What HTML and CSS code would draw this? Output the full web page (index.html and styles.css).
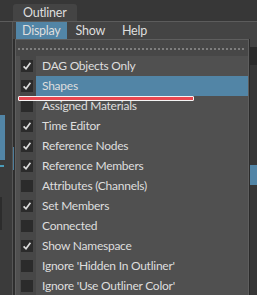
FILE: index.html
```html
<!DOCTYPE html>
<html lang="en">
<head>
    <meta charset="UTF-8">
    <meta name="viewport" content="width=device-width, initial-scale=1.0">
    <title>Outliner</title>
    <link rel="stylesheet" href="styles.css">
</head>
<body>
    <div class="top">
        <div class="tab">Outliner</div>
    </div>
    <div class="main">
        <div class="side">
            <div class="side-sel"></div>
            <div class="side-mark"></div>
            <div class="side-box"></div>
        </div>
        <div class="win">
            <div class="menubar">
                <span class="mb-item active">Display</span>
                <span class="mb-item show">Show</span>
                <span class="mb-item help">Help</span>
            </div>
            <div class="win-body">
                <div class="gutter"><div class="gutter-mark"></div></div>
                <div class="menu">
                    <div class="tearoff"><div class="dots"></div></div>
                    <div class="items" id="items"></div>
                    <div class="annot"></div>
                </div>
                <div class="rest">
                    <div class="rest-bar"></div>
                    <div class="rest-field"></div>
                    <div class="rest-list"><div class="rest-sel"></div></div>
                </div>
            </div>
        </div>
    </div>

    <script>
        // menu entries: label and checked state
        var entries = [
            ["DAG Objects Only", true],
            ["Shapes", true],
            ["Assigned Materials", false],
            ["Time Editor", true],
            ["Reference Nodes", true],
            ["Reference Members", true],
            ["Attributes (Channels)", false],
            ["Set Members", true],
            ["Connected", false],
            ["Show Namespace", true],
            ["Ignore 'Hidden In Outliner'", false],
            ["Ignore 'Use Outliner Color'", false]
        ];
        var check = '<svg width="12" height="12" viewBox="0 0 12 12"><path d="M2.6 6.4 L5 8.8 L9.4 2.8" fill="none" stroke="#dcdcdc" stroke-width="1.7"/></svg>';
        var list = document.getElementById("items");
        entries.forEach(function(e, i) {
            var row = document.createElement("div");
            row.className = "row" + (i === 1 ? " active" : "");
            row.innerHTML = '<div class="ico"><div class="box">' + (e[1] ? check : '') + '</div></div>' +
                '<div class="label">' + e[0] + '</div>';
            list.appendChild(row);
        });
    </script>
</body>
</html>
```

FILE: styles.css
```css
body {
    margin: 0;
    width: 257px;
    height: 295px;
    overflow: hidden;
    background: #373737;
    font-family: Lato, "Noto Sans", sans-serif;
    font-size: 12px;
    letter-spacing: -0.25px;
    color: #dedede;
}
.top {
    height: 21px;
    display: flex;
    align-items: flex-end;
}
.tab {
    margin-left: 13px;
    width: 54px;
    height: 17px;
    line-height: 17px;
    padding-left: 10px;
    background: #444444;
    border-radius: 3px 3px 0 0;
    font-size: 12.5px;
}
.main {
    display: flex;
    height: 273px;
    border-top: 1px solid #5c5c5c;
}
.side {
    width: 12px;
    background: #3b3b3b;
    border-right: 1px solid #555555;
    display: flex;
    flex-direction: column;
}
.side-sel {
    margin-top: 93px;
    width: 5px;
    height: 45px;
    background: #5285a6;
}
.side-mark {
    margin-top: 5px;
    width: 4px;
    height: 2px;
    background: #4a9bb8;
}
.side-box {
    margin-top: 30px;
    width: 2px;
    height: 33px;
    background: #2c2c2c;
}
.win {
    flex: 1;
    display: flex;
    flex-direction: column;
}
.menubar {
    height: 17px;
    background: #444444;
    display: flex;
    padding-left: 3px;
    line-height: 17px;
    font-size: 12.5px;
}
.mb-item {
    padding: 0 6px;
}
.mb-item.active {
    background: #5285a6;
}
.mb-item.show {
    margin-left: 3px;
}
.mb-item.help {
    margin-left: 5px;
}
.win-body {
    flex: 1;
    display: flex;
}
.gutter {
    width: 2px;
    background: #2e2e2e;
}
.gutter-mark {
    margin-top: 108px;
    width: 1px;
    height: 23px;
    background: #4f7e9c;
}
.menu {
    position: relative;
    width: 232px;
    background: #505050;
    border: 1px solid #5e5e5e;
    border-bottom: none;
}
.tearoff {
    height: 16px;
    background: #474747;
    padding-top: 8px;
    box-sizing: border-box;
}
.dots {
    margin: 0 2px 0 2px;
    height: 2px;
    background: repeating-linear-gradient(90deg, #7e7e7e 0 2px, transparent 2px 4px);
}
.row {
    display: flex;
    height: 20px;
}
.ico {
    width: 16px;
    margin-left: 4px;
    background: #474747;
}
.box {
    width: 12px;
    height: 12px;
    margin: 4px 0 0 1px;
    background: #2b2b2b;
}
.box svg {
    display: block;
}
.label {
    flex: 1;
    padding-left: 6px;
    line-height: 20px;
    white-space: nowrap;
}
.row.active .label {
    background: #5285a6;
}
.annot {
    position: absolute;
    left: 2px;
    top: 56px;
    width: 174px;
    height: 3px;
    background: #e8464f;
    border: 1px solid #f4f4f4;
    border-radius: 1px;
}
.rest {
    flex: 1;
    display: flex;
    flex-direction: column;
    border-left: 1px solid #2a2a2a;
}
.rest-bar {
    height: 8px;
    background: #444444;
}
.rest-field {
    height: 18px;
    background: #2b2b2b;
}
.rest-list {
    flex: 1;
    background: #373737;
}
.rest-sel {
    margin-top: 100px;
    height: 20px;
    background: #5285a6;
}
```
